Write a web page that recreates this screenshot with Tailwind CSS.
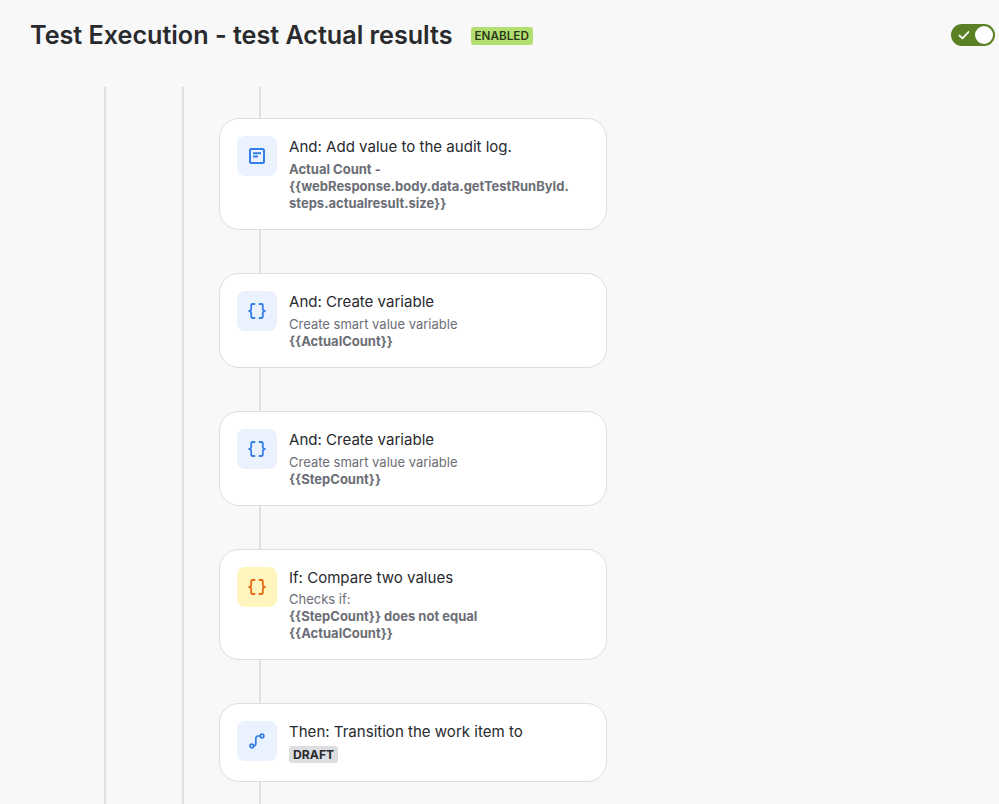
<!doctype html>
<html><head><meta charset="utf-8"><script src="https://cdn.jsdelivr.net/npm/@tailwindcss/browser@4"></script></head>
<body class="m-0">
<div class="w-[999px] h-[804px] overflow-hidden bg-[#f8f8f8] font-['Inter',sans-serif] text-[#292a2e]">
  <header class="h-[87px] pl-[30px] pr-[4px] pt-[19px] flex items-start justify-between">
    <div class="flex items-center h-[32px]">
      <h1 class="text-[25.150px] leading-[32px] font-semibold">Test Execution - test Actual results</h1>
      <span class="ml-[18px] mt-[1px] h-[18px] px-[4px] rounded-[3px] bg-[#b3df72] text-[11.700px] leading-[18px] font-semibold text-[#2c3a18]">ENABLED</span>
    </div>
    <div class="mt-[5px] w-[44px] h-[22px] rounded-full bg-[#5b7f24] flex items-center justify-between pl-[6px] pr-[2px]">
      <svg width="14" height="14" viewBox="0 0 14 14" fill="none" stroke="#fff" stroke-width="1.800" stroke-linecap="round" stroke-linejoin="round"><path d="M2.500 7.500l3 2.800L11.500 4"/></svg>
      <span class="w-[18px] h-[18px] rounded-full bg-white"></span>
    </div>
  </header>
  <div class="flex pl-[104px] h-[717px]">
    <div class="w-[78px] border-l-2 border-[#dfe0e2]"></div>
    <div class="w-[78px] border-l-2 border-[#dfe0e2] -mr-[41px]"></div>
    <div class="w-[388px] flex flex-col">
      <div class="ml-[40px] w-[2px] h-[31px] shrink-0 bg-[#dfe0e2]"></div>

      <div class="h-[112px] shrink-0 bg-white border border-[#dddee1] rounded-[20px] flex gap-[12px] pl-[17px] pt-[17px]">
        <div class="w-[40px] h-[40px] rounded-[8px] bg-[#e9f2fe] flex items-center justify-center shrink-0">
          <svg width="16" height="16" viewBox="0 0 16 16" fill="none" stroke="#357de8" stroke-width="2"><rect x="1" y="1" width="14" height="14" rx="1.500"/><path d="M4 5.200h8M4 8.500h5"/></svg>
        </div>
        <div class="pt-[1px]">
          <div class="text-[15.050px] leading-[20px]">And: Add value to the audit log.</div>
          <div class="mt-[4px] text-[13px] leading-[17px] font-bold text-[#6b6e76] w-[290px]">Actual Count -<br>{{webResponse.body.data.getTestRunById.<br>steps.actualresult.size}}</div>
        </div>
      </div>
      <div class="ml-[40px] w-[2px] h-[43px] shrink-0 bg-[#dfe0e2]"></div>

      <div class="h-[95px] shrink-0 bg-white border border-[#dddee1] rounded-[20px] flex gap-[12px] pl-[17px] pt-[17px]">
        <div class="w-[40px] h-[40px] rounded-[8px] bg-[#e9f2fe] flex items-center justify-center shrink-0">
          <svg width="18" height="16" viewBox="0 0 18 16" fill="none" stroke="#357de8" stroke-width="1.800" stroke-linecap="round" stroke-linejoin="round"><path d="M6.500 1H4.400C3.600 1 3.200 1.500 3.200 2.200V6c0 .9-.5 1.700-2 2 1.500.3 2 1.100 2 2v3.800c0 .7.400 1.200 1.200 1.200h2.100M11.500 1h2.100c.8 0 1.200.5 1.200 1.200V6c0 .9.500 1.700 2 2-1.500.3-2 1.100-2 2v3.800c0 .7-.4 1.200-1.200 1.200h-2.100"/></svg>
        </div>
        <div class="pt-[1px]">
          <div class="text-[15.050px] leading-[20px]">And: Create variable</div>
          <div class="mt-[4px] text-[13px] leading-[17px] text-[#6b6e76]">Create smart value variable<br><span class="font-bold">{{ActualCount}}</span></div>
        </div>
      </div>
      <div class="ml-[40px] w-[2px] h-[43px] shrink-0 bg-[#dfe0e2]"></div>

      <div class="h-[95px] shrink-0 bg-white border border-[#dddee1] rounded-[20px] flex gap-[12px] pl-[17px] pt-[17px]">
        <div class="w-[40px] h-[40px] rounded-[8px] bg-[#e9f2fe] flex items-center justify-center shrink-0">
          <svg width="18" height="16" viewBox="0 0 18 16" fill="none" stroke="#357de8" stroke-width="1.800" stroke-linecap="round" stroke-linejoin="round"><path d="M6.500 1H4.400C3.600 1 3.200 1.500 3.200 2.200V6c0 .9-.5 1.700-2 2 1.500.3 2 1.100 2 2v3.800c0 .7.400 1.200 1.200 1.200h2.100M11.500 1h2.100c.8 0 1.200.5 1.200 1.200V6c0 .9.500 1.700 2 2-1.500.3-2 1.100-2 2v3.800c0 .7-.4 1.200-1.200 1.200h-2.100"/></svg>
        </div>
        <div class="pt-[1px]">
          <div class="text-[15.050px] leading-[20px]">And: Create variable</div>
          <div class="mt-[4px] text-[13px] leading-[17px] text-[#6b6e76]">Create smart value variable<br><span class="font-bold">{{StepCount}}</span></div>
        </div>
      </div>
      <div class="ml-[40px] w-[2px] h-[43px] shrink-0 bg-[#dfe0e2]"></div>

      <div class="h-[111px] shrink-0 bg-white border border-[#dddee1] rounded-[20px] flex gap-[12px] pl-[17px] pt-[17px]">
        <div class="w-[40px] h-[40px] rounded-[8px] bg-[#fff5bf] flex items-center justify-center shrink-0">
          <svg width="18" height="16" viewBox="0 0 18 16" fill="none" stroke="#e56910" stroke-width="1.800" stroke-linecap="round" stroke-linejoin="round"><path d="M6.500 1H4.400C3.600 1 3.200 1.500 3.200 2.200V6c0 .9-.5 1.700-2 2 1.500.3 2 1.100 2 2v3.800c0 .7.400 1.200 1.200 1.200h2.100M11.500 1h2.100c.8 0 1.200.5 1.200 1.200V6c0 .9.500 1.700 2 2-1.500.3-2 1.100-2 2v3.800c0 .7-.4 1.200-1.200 1.200h-2.100"/></svg>
        </div>
        <div class="pt-[1px]">
          <div class="text-[15.050px] leading-[20px]">If: Compare two values</div>
          <div class="mt-[3px] text-[13px] leading-[17px] text-[#6b6e76]">Checks if:<br><span class="font-bold">{{StepCount}} does not equal<br>{{ActualCount}}</span></div>
        </div>
      </div>
      <div class="ml-[40px] w-[2px] h-[43px] shrink-0 bg-[#dfe0e2]"></div>

      <div class="h-[79px] shrink-0 bg-white border border-[#dddee1] rounded-[20px] flex gap-[12px] pl-[17px] pt-[17px]">
        <div class="w-[40px] h-[40px] rounded-[8px] bg-[#e9f2fe] flex items-center justify-center shrink-0">
          <svg width="16" height="16" viewBox="0 0 16 16" fill="none" stroke="#357de8" stroke-width="1.700" stroke-linecap="round"><circle cx="2.800" cy="13" r="1.800"/><circle cx="13" cy="3" r="1.800"/><path d="M4.600 13c1.900 0 2.200-1.300 2.200-2.800V6c0-1.700.5-3 2.300-3h2.100"/></svg>
        </div>
        <div class="pt-[1px]">
          <div class="text-[15.050px] leading-[20px]">Then: Transition the work item to</div>
          <div class="mt-[4px] w-fit h-[17px] px-[4px] rounded-[3px] bg-[#dddee1] text-[12.200px] leading-[17px] font-bold">DRAFT</div>
        </div>
      </div>
      <div class="ml-[40px] w-[2px] h-[43px] shrink-0 bg-[#dfe0e2]"></div>
    </div>
  </div>
</div>
</body></html>
